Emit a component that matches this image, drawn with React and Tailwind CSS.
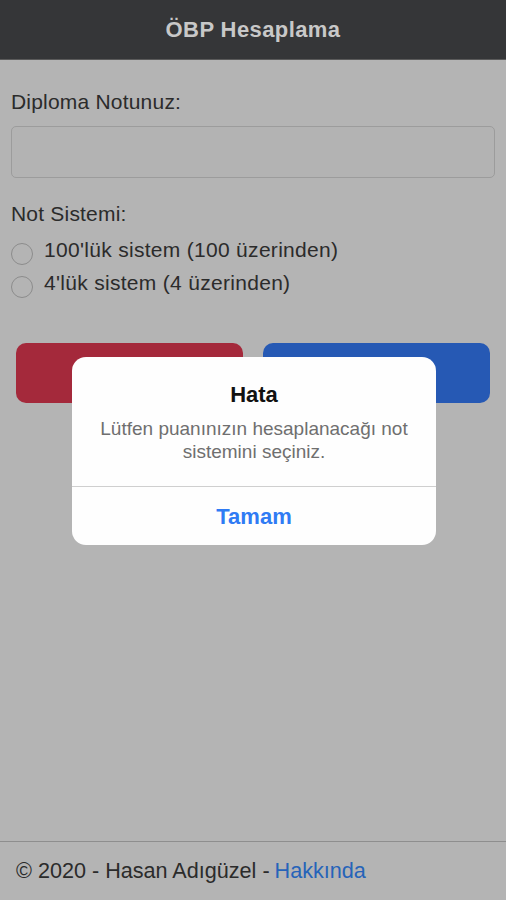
export default function App() {
  return (
    <div
      className="relative flex h-[900px] flex-col bg-[#b4b4b4] text-[#2b2b2b]"
      style={{ fontFamily: '"Liberation Sans", Arial, sans-serif' }}
    >
      {/* Header */}
      <header className="flex h-[60px] items-center justify-center border-b border-[#5a5a5a] bg-[#353638]">
        <h1 className="text-[22px] font-bold tracking-[0.4px] text-[#c8c8c8]">ÖBP Hesaplama</h1>
      </header>

      {/* Form */}
      <main className="flex-1 px-[11px] pt-[29px]">
        <label className="block text-[21px] leading-[26px] tracking-[0.2px]">Diploma Notunuz:</label>
        <div className="mt-[11px] h-[52px] w-full rounded-[5px] border border-[#9c9c9c] bg-[#b3b3b3]" />

        <p className="mt-[23px] text-[21px] leading-[26px] tracking-[0.2px]">Not Sistemi:</p>
        <div className="mt-[6px] flex flex-col">
          {["100'lük sistem (100 üzerinden)", "4'lük sistem (4 üzerinden)"].map((t) => (
            <div key={t} className="flex h-[33px] items-center gap-[11px]">
              <span className="mt-[9px] h-[22px] w-[22px] shrink-0 rounded-full border border-[#8c8c8c]" />
              <span className="text-[21px] leading-[24px] tracking-[0.3px]">{t}</span>
            </div>
          ))}
        </div>

        <div className="mt-[44px] flex gap-[20px] px-[5px]">
          <div className="h-[60px] flex-1 rounded-[10px] bg-[#a4293b]" />
          <div className="h-[60px] flex-1 rounded-[10px] bg-[#2659b4]" />
        </div>
      </main>

      {/* Footer */}
      <footer className="flex h-[59px] items-center border-t border-[#8e8e8e] px-[16px] text-[21.6px]">
        <span>© 2020 - Hasan Adıgüzel - </span>
        <span className="ml-[5px] text-[#2663b9]">Hakkında</span>
      </footer>

      {/* Alert dialog */}
      <div className="absolute left-[72px] top-[357px] w-[364px] rounded-[14px] bg-[#fefefe] text-center">
        <div className="px-[16px] pb-[23px] pt-[24px]">
          <h2 className="text-[22px] font-bold leading-[28px] text-[#111]">Hata</h2>
          <p className="mt-[8px] text-[19px] leading-[23px] text-[#6f6f6f]">
            Lütfen puanınızın hesaplanacağı not sistemini seçiniz.
          </p>
        </div>
        <div className="flex h-[59px] items-center justify-center border-t border-[#cfcfcf]">
          <span className="text-[22px] font-bold text-[#2f7bf4]">Tamam</span>
        </div>
      </div>
    </div>
  );
}
